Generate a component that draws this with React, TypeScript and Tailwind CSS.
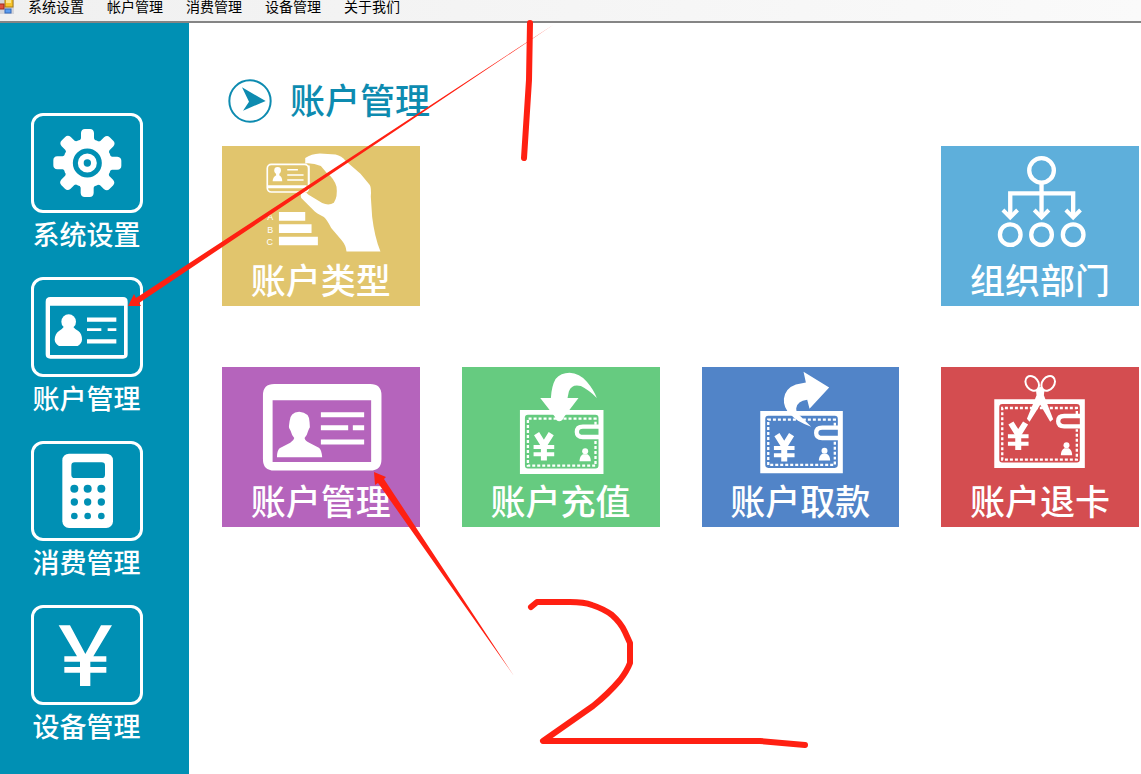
import type { ReactNode } from "react";

const menuItems = ["系统设置", "帐户管理", "消费管理", "设备管理", "关于我们"];

function AppIcon() {
  return (
    <svg viewBox="0 0 14 14" className="h-3.5 w-3.5 shrink-0" aria-hidden="true">
      <rect x="0" y="0" width="14" height="14" fill="#d5d5da" />
      <rect x="5" y="-1" width="8" height="8" fill="#f7c52d" stroke="#a87810" />
      <rect x="6" y="0" width="5" height="3" fill="#fde58a" />
      <rect x="-1" y="4" width="5" height="5" fill="#e0503c" stroke="#a02818" />
      <rect x="5" y="9" width="6" height="4" fill="#5a9cf0" stroke="#3468b8" />
    </svg>
  );
}

function GearIcon() {
  return (
    <svg viewBox="102 49 318 282" className="h-full w-full" aria-hidden="true">
      <g fill="white">
        <circle cx="262" cy="190" r="73" />
        {[0, 45, 90, 135, 180, 225, 270, 315].map((angle) => (
          <path
            key={angle}
            d="M238 126 L243 116 V100 Q244 88 255 88 H270 Q281 88 282 100 V116 L287 126 Z"
            transform={`rotate(${angle} 262 190)`}
          />
        ))}
        <circle cx="262" cy="190" r="36" stroke="#0090b4" strokeWidth="15" />
      </g>
      <circle cx="262" cy="190" r="11" fill="#0090b4" />
    </svg>
  );
}

function CardIcon() {
  return (
    <svg viewBox="99 45 318 282" className="h-full w-full" aria-hidden="true">
      <path
        d="M148 96 H366 Q380 96 380 110 V268 Q380 281 366 281 H148 Q134 281 134 268 V110 Q134 96 148 96 Z M147 122 V270 H369 V122 Z"
        fill="white"
        fillRule="evenodd"
      />
      <circle cx="203" cy="170" r="22" fill="white" />
      <path
        d="M188 186 H217 Q221 192 232 198 Q243 206 243 224 Q242 236 230 243 H174 Q162 236 161 224 Q162 206 174 198 Q184 192 188 186 Z"
        fill="white"
      />
      <path d="M258 164 H346 M258 229 H346" stroke="white" strokeWidth="13" />
      <path d="M258 194 H301 M320 194 H346" stroke="white" strokeWidth="8" />
    </svg>
  );
}

function CalculatorIcon() {
  return (
    <svg viewBox="105 39 318 282" className="h-full w-full" aria-hidden="true">
      <rect x="190" y="68" width="152" height="223" rx="20" fill="white" />
      <g fill="#0090b4">
        <rect x="217" y="94" width="101" height="47" rx="10" />
        {[226, 266, 307].map((cx) => (
          <g key={cx}>
            <circle cx={cx} cy="173" r="12" />
            <circle cx={cx} cy="213" r="11" />
            <circle cx={cx} cy="255" r="10" />
          </g>
        ))}
      </g>
    </svg>
  );
}

function YenIcon() {
  return (
    <svg viewBox="99 39 318 282" className="h-full w-full" aria-hidden="true">
      <path
        d="M173 91 H207 L253 177 L300 91 H333 L277 184 H316 V200 H268 V216 H316 V233 H268 V273 H237 V233 H190 V216 H237 V200 H190 V184 H228 Z"
        fill="white"
      />
    </svg>
  );
}

function HandCardIcon() {
  return (
    <svg viewBox="36 228 594 354" className="h-[118px] w-full" aria-hidden="true">
      <rect x="172" y="283" width="124" height="83" rx="12" fill="none" stroke="white" strokeWidth="5" />
      <path d="M172 350 H290" stroke="white" strokeWidth="9" />
      <circle cx="203" cy="301" r="10" fill="white" />
      <path d="M197 308 H209 L208 316 Q217 321 217 334 H188 Q189 321 199 316 Z" fill="white" />
      <path d="M232 299 H264 M232 315 H281 M232 330 H281" stroke="white" strokeWidth="4" />
      <path
        d="M286 264 Q304 251 330 250 L377 253 Q396 257 407 272 L452 311 L480 345 Q485 354 483 380 L487 440 Q494 500 512 545 H410 Q408 526 396 512 L364 474 Q352 450 342 441 Q318 430 308 418 L274 384 Q270 372 277 368 Q286 364 296 374 Q316 386 337 399 Q357 408 372 398 Q384 380 380 350 Q373 325 350 308 L333 288 Q310 278 286 280 Z"
        fill="white"
      />
      <path d="M297 286 V344" stroke="white" strokeWidth="5" />
      <g fill="white" fontSize="27" fontFamily="'Liberation Sans', Arial, sans-serif">
        <text x="172" y="450">A</text>
        <text x="172" y="488">B</text>
        <text x="170" y="526">C</text>
      </g>
      <path d="M207 439 H286 M207 476 H305 M207 513 H324" stroke="white" strokeWidth="26" />
    </svg>
  );
}

function DepartmentIcon() {
  return (
    <svg viewBox="36 18 594 354" className="h-[118px] w-full" aria-hidden="true">
      <g fill="none" stroke="white" strokeWidth="13">
        <circle cx="338" cy="91" r="37" />
        <circle cx="244" cy="284" r="31" />
        <circle cx="338" cy="284" r="31" />
        <circle cx="433" cy="284" r="31" />
        <path d="M338 130 V228 M244 228 V160 H433 V228" />
        <path
          d="M222 210 L244 232 L266 210 M316 210 L338 232 L360 210 M411 210 L433 232 L455 210"
          strokeWidth="12"
        />
      </g>
    </svg>
  );
}

function AccountIcon() {
  return (
    <svg viewBox="21 21 594 354" className="h-[118px] w-full" aria-hidden="true">
      <path
        d="M178 72 H466 Q500 72 500 106 V298 Q500 332 466 332 H178 Q144 332 144 298 V106 Q144 72 178 72 Z M173 121 V306 H469 V121 Z"
        fill="white"
        fillRule="evenodd"
      />
      <path
        d="M253 155 Q284 157 284 186 L285 202 Q282 207 280 212 Q277 225 269 234 Q271 243 283 248 L312 263 Q320 268 322 292 H186 Q186 272 194 265 L226 248 Q237 242 238 234 Q230 224 227 212 Q221 206 222 199 L224 184 Q225 157 253 155 Z"
        fill="white"
      />
      <path d="M318 164 H448 M318 203 H400 M414 203 H448 M318 246 H448" stroke="white" strokeWidth="15" />
    </svg>
  );
}

interface WalletProps {
  x: number;
  y: number;
  width: number;
  height: number;
}

function Wallet({ x, y, width, height }: WalletProps) {
  const right = x + width;
  const bottom = y + height;
  return (
    <g>
      <path
        d={`M${x} ${y} H${right} V${bottom} H${x} Z M${x + 24} ${y + 14} Q${x + 15} ${y + 14} ${x + 15} ${y + 24} V${bottom - 26} Q${x + 15} ${bottom - 16} ${x + 24} ${bottom - 16} H${right - 24} Q${right - 15} ${bottom - 16} ${right - 15} ${bottom - 26} V${y + 24} Q${right - 15} ${y + 14} ${right - 24} ${y + 14} Z`}
        fill="white"
        fillRule="evenodd"
      />
      <g fill="none" stroke="white">
        <path
          d={`M${right - 24} ${y + 44} V${y + 26} H${x + 24} V${bottom - 25} H${right - 24} V${y + 90}`}
          strokeWidth="7"
          strokeDasharray="9 6"
        />
        <path
          d={`M${right - 12} ${y + 50} H${right - 62} Q${right - 80} ${y + 50} ${right - 80} ${y + 66} Q${right - 80} ${y + 81} ${right - 62} ${y + 81} H${right - 12}`}
          strokeWidth="13"
        />
        <path
          d={`M${x + 50} ${y + 71} L${x + 72} ${y + 106} L${x + 94} ${y + 71} M${x + 72} ${y + 104} V${y + 152}`}
          strokeWidth="18"
        />
        <path d={`M${x + 41} ${y + 111} H${x + 103} M${x + 41} ${y + 133} H${x + 103}`} strokeWidth="12" />
      </g>
      <g fill="white">
        <circle cx={right - 55} cy={bottom - 68} r="9" />
        <path
          d={`M${right - 62} ${bottom - 59} H${right - 48} Q${right - 38} ${bottom - 53} ${right - 38} ${bottom - 38} H${right - 72} Q${right - 72} ${bottom - 53} ${right - 62} ${bottom - 59} Z`}
        />
      </g>
    </g>
  );
}

function RechargeIcon() {
  return (
    <svg viewBox="21 21 594 354" className="h-[118px] w-full" aria-hidden="true">
      <Wallet x={195} y={150} width={251} height={192} />
      <path
        d="M256 114 H288 Q290 78 302 57 Q318 38 344 38 Q374 39 396 65 Q416 88 426 114 Q404 91 378 78 Q351 71 342 94 L338 114 H371 L328 170 Q322 184 313 184 Q304 184 300 170 Z"
        fill="white"
      />
    </svg>
  );
}

function WithdrawIcon() {
  return (
    <svg viewBox="18 21 594 354" className="h-[118px] w-full" aria-hidden="true">
      <Wallet x={193} y={153} width={248} height={187} />
      <path
        d="M323 35 L400 82 L341 146 L334 119 Q304 122 301 145 Q300 157 313 168 L346 200 Q306 188 283 163 Q262 142 264 116 Q268 84 300 73 L330 67 Z"
        fill="white"
      />
    </svg>
  );
}

function RefundIcon() {
  return (
    <svg viewBox="33 21 594 354" className="h-[118px] w-full" aria-hidden="true">
      <Wallet x={193} y={118} width={272} height={206} />
      <g fill="none" stroke="white" strokeWidth="6">
        <ellipse cx="307" cy="70" rx="18" ry="24" transform="rotate(-38 307 70)" />
        <ellipse cx="355" cy="70" rx="18" ry="24" transform="rotate(38 355 70)" />
      </g>
      <path
        d="M318 88 L331 80 L344 88 L342 106 L370 178 L361 185 L331 134 L299 185 L291 176 L320 106 Z"
        fill="white"
      />
    </svg>
  );
}

const sideItems: { label: string; icon: ReactNode }[] = [
  { label: "系统设置", icon: <GearIcon /> },
  { label: "账户管理", icon: <CardIcon /> },
  { label: "消费管理", icon: <CalculatorIcon /> },
  { label: "设备管理", icon: <YenIcon /> },
];

interface TileProps {
  label: string;
  color: string;
  icon: ReactNode;
}

const tiles: TileProps[] = [
  { label: "账户类型", color: "bg-[#e1c56d]", icon: <HandCardIcon /> },
  { label: "组织部门", color: "col-start-4 bg-[#5eafdb]", icon: <DepartmentIcon /> },
  { label: "账户管理", color: "bg-[#b564bc]", icon: <AccountIcon /> },
  { label: "账户充值", color: "bg-[#66cb80]", icon: <RechargeIcon /> },
  { label: "账户取款", color: "bg-[#5184c8]", icon: <WithdrawIcon /> },
  { label: "账户退卡", color: "bg-[#d44d50]", icon: <RefundIcon /> },
];

function Tile({ label, color, icon }: TileProps) {
  return (
    <button type="button" className={`flex flex-col items-center pb-3 text-white ${color}`}>
      {icon}
      <span className="text-[35px] leading-[30px] font-medium whitespace-nowrap">{label}</span>
    </button>
  );
}

/* Hand drawn steps over the window */
function Annotations() {
  return (
    <svg className="pointer-events-none absolute left-0 top-0 h-full w-full" aria-hidden="true">
      <g fill="#ff2012">
        <path d="M128 306 L134 294 L136 298 L553 25 L139 303 L141 306 Z" />
        <path d="M374 472 L386 477 L384 479 L514 676 L378 483 L375 485 Z" />
      </g>
      <g fill="none" stroke="#ff2012" strokeWidth="6" strokeLinecap="round" strokeLinejoin="round">
        <path d="M530 23 L529 80 L524 158" />
        <path d="M531 607 L537 602 H570 Q584 602 592 605 Q604 609 612 615 Q621 623 625 632 L630 643 V663 Q627 671 620 680 Q608 694 593 706 L563 727 L543 741 H760 L805 745" />
      </g>
    </svg>
  );
}

function App() {
  return (
    <div className="relative flex min-h-screen flex-col bg-white font-['Noto_Sans_CJK_SC',sans-serif]">
      <header className="flex h-[23px] items-start border-b-2 border-[#858585] bg-linear-to-r from-[#f0f0f0] to-[#fafafa]">
        <AppIcon />
        <nav className="ml-3.5 flex gap-[23px]">
          {menuItems.map((item) => (
            <button key={item} type="button" className="text-sm leading-3 whitespace-nowrap text-black">
              {item}
            </button>
          ))}
        </nav>
      </header>
      <div className="flex flex-1">
        <aside className="flex w-[189px] shrink-0 flex-col items-center gap-[25px] bg-[#0090b4] pt-[90px] pr-4">
          {sideItems.map((item) => (
            <button key={item.label} type="button" className="flex flex-col items-center gap-[3px] text-white">
              <span className="block h-[100px] w-28 rounded-xl border-[3px] border-white">{item.icon}</span>
              <span className="text-[27px] leading-9 font-medium whitespace-nowrap">{item.label}</span>
            </button>
          ))}
        </aside>
        <main className="flex-1 pt-14 pr-0.5 pl-[33px]">
          <h1 className="ml-1.5 flex items-start gap-[18px] text-[35px] leading-10 font-medium text-[#0d8bb0]">
            <svg viewBox="0 0 132 132" className="h-11 w-11" aria-hidden="true">
              <circle cx="66" cy="66" r="62" fill="none" stroke="currentColor" strokeWidth="6" />
              <path d="M42 25 L113 66 L45 95 L63 68 Z" fill="currentColor" />
            </svg>
            账户管理
          </h1>
          <section className="mt-[23px] grid grid-cols-4 gap-x-[42px] gap-y-[61px]">
            {tiles.map((tile) => (
              <Tile key={tile.label} {...tile} />
            ))}
          </section>
        </main>
      </div>
      <Annotations />
    </div>
  );
}

export default App;
